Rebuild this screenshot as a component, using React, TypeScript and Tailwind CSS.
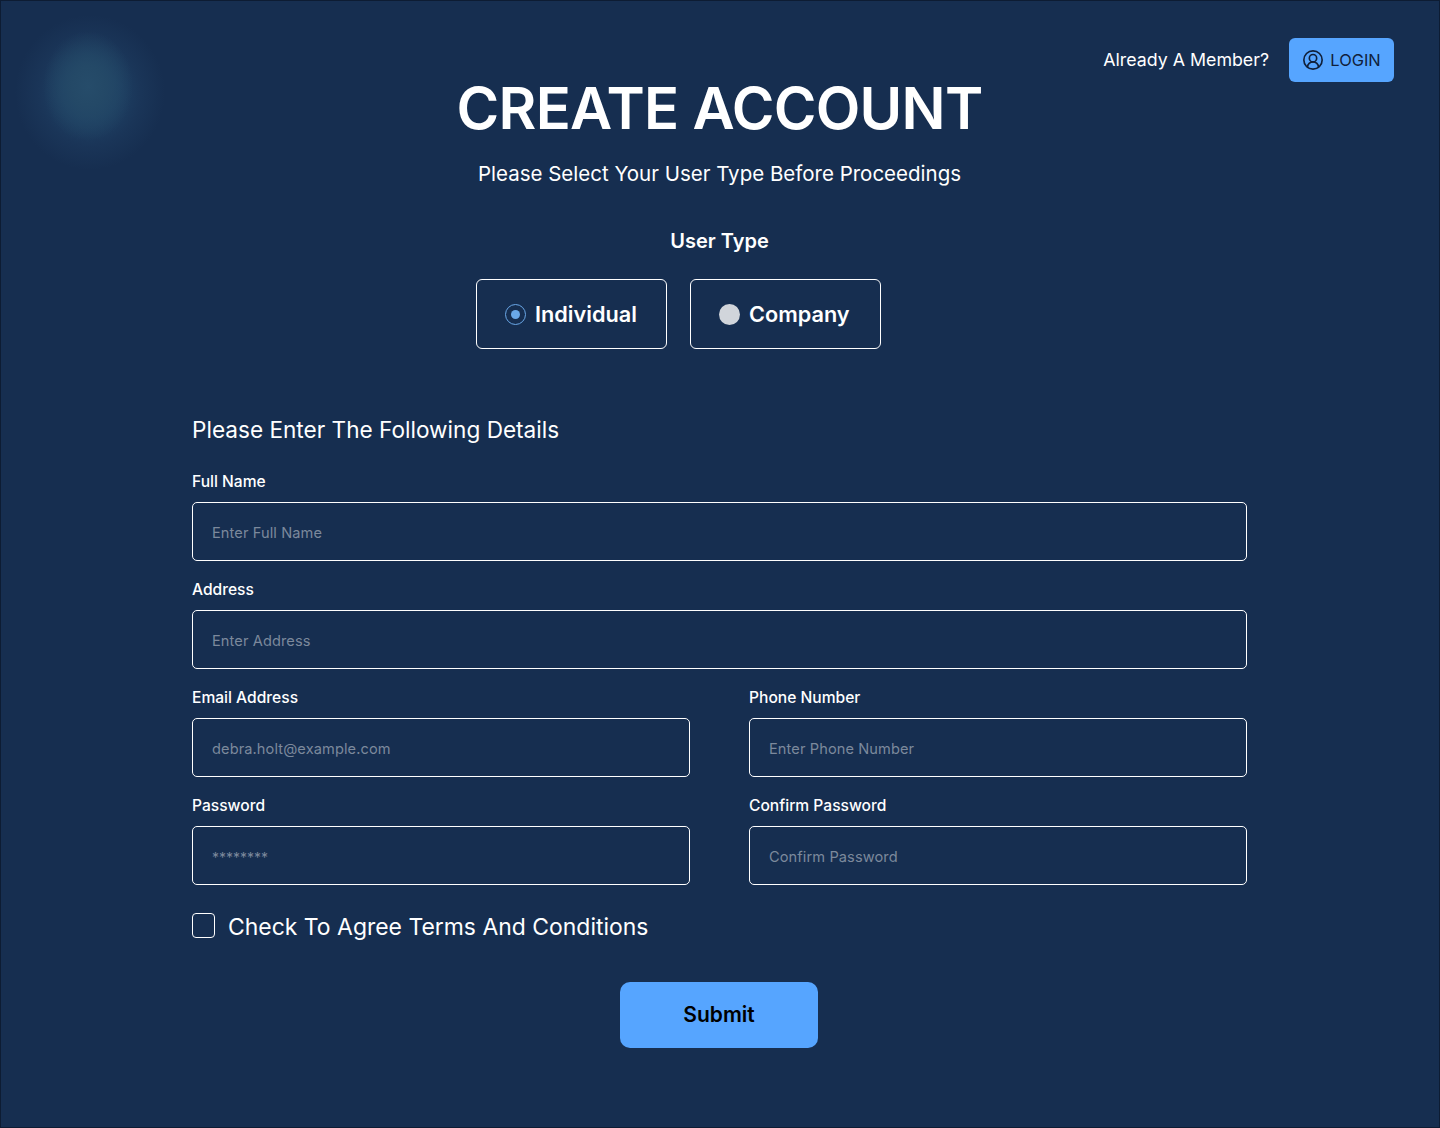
import React from 'react';
import { CircleUserRound } from 'lucide-react';

const font = "font-['Inter','Noto_Sans',sans-serif]";

const Field: React.FC<{ label: string; placeholder: string; small?: boolean }> = ({ label, placeholder, small }) => (
    <div className="flex flex-col">
        <label className="h-[33px] pt-[3px] text-[15.6px] leading-[20px] font-medium text-white">{label}</label>
        <input
            readOnly
            placeholder={placeholder}
            className={`h-[59px] w-full rounded-[5px] border border-white bg-transparent px-[19px] outline-none placeholder:text-[#7c899c] ${small ? 'pt-[3px] text-[14px]' : 'pt-[3px] text-[14.6px] tracking-[0.1px]'}`}
        />
    </div>
);

const UserOption: React.FC<{ label: string; checked?: boolean }> = ({ label, checked }) => (
    <div className="flex h-[70px] w-[191px] items-center gap-[9px] rounded-[6px] border border-white pl-[28px]">
        {checked ? (
            <span className="flex h-[21px] w-[21px] items-center justify-center rounded-full border border-[#6aa8e8]">
                <span className="h-[9px] w-[9px] rounded-full bg-[#6aa8e8]"></span>
            </span>
        ) : (
            <span className="h-[21px] w-[21px] rounded-full bg-[#d1d5db]"></span>
        )}
        <span className="text-[21.7px] leading-[28px] font-semibold text-white">{label}</span>
    </div>
);

const App: React.FC = () => {
    return (
        <div className={`relative h-[1128px] w-[1440px] overflow-hidden border border-[#0d1c33] bg-[#162e50] ${font}`}>
            {/* soft glow, top left */}
            <div className="absolute top-[14px] left-[14px] h-[155px] w-[150px] rounded-[50%] bg-[radial-gradient(closest-side,#214565,#1e4063_35%,#1a3558_68%,#162e5000)]"></div>
            <div className="absolute top-[30px] left-[42px] h-[110px] w-[90px] rounded-[50%] bg-[radial-gradient(closest-side,#264c6a,#244967_35%,#21456500)]"></div>

            <div className="relative flex flex-col">
                <div className="mt-[37px] flex h-[44px] items-center justify-end gap-[20px] pr-[45px]">
                    <span className="text-[17.8px] text-white">Already A Member?</span>
                    <button className="flex h-[44px] w-[105px] items-center justify-center gap-[6px] rounded-[6px] bg-[#56a5ff] text-[16.4px] text-[#10203a]">
                        <CircleUserRound size={22} strokeWidth={1.8} />
                        LOGIN
                    </button>
                </div>

                <h1 className="mt-[-4px] w-[1437px] text-center text-[58px] leading-[60px] font-semibold tracking-[-0.7px] text-white">CREATE ACCOUNT</h1>
                <p className="mt-[21px] w-[1437px] text-center text-[20.5px] leading-[30px] text-white">Please Select Your User Type Before Proceedings</p>
                <p className="mt-[37px] w-[1437px] text-center text-[20px] leading-[30px] font-semibold text-white">User Type</p>

                <div className="mt-[23px] ml-[475px] flex gap-[23px]">
                    <UserOption label="Individual" checked />
                    <UserOption label="Company" />
                </div>

                <div className="mt-[64px] ml-[191px] flex w-[1055px] flex-col">
                    <h2 className="text-[22.6px] leading-[34px] text-white">Please Enter The Following Details</h2>
                    <div className="mt-[22px] flex flex-col gap-[16px]">
                        <Field label="Full Name" placeholder="Enter Full Name" />
                        <Field label="Address" placeholder="Enter Address" />
                        <div className="grid grid-cols-[498px_498px] gap-x-[59px] gap-y-[16px]">
                            <Field label="Email Address" placeholder="debra.holt@example.com" />
                            <Field label="Phone Number" placeholder="Enter Phone Number" />
                            <Field label="Password" placeholder="********" small />
                            <Field label="Confirm Password" placeholder="Confirm Password" />
                        </div>
                    </div>
                    <div className="mt-[27px] flex items-center gap-[13px]">
                        <span className="mb-[3px] h-[25px] w-[23px] rounded-[4px] border border-white"></span>
                        <span className="text-[22.95px] leading-[30px] text-white">Check To Agree Terms And Conditions</span>
                    </div>
                    <button className="mt-[40px] ml-[428px] h-[66px] w-[198px] rounded-[10px] bg-[#56a5ff] text-[21px] font-semibold text-black">Submit</button>
                </div>
            </div>
        </div>
    );
};

export default App;
